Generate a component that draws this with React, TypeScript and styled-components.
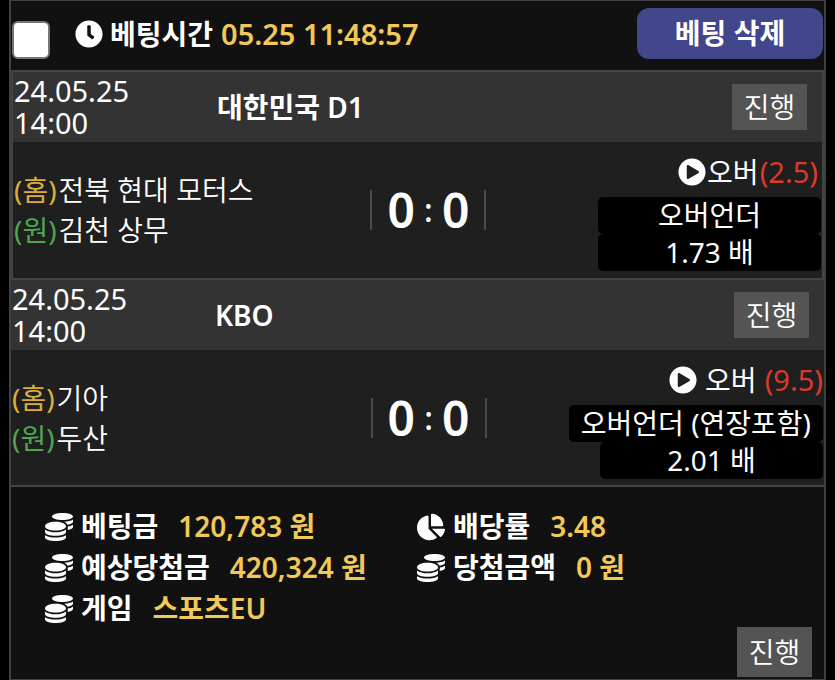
import React from "react";
import styled, { createGlobalStyle } from "styled-components";
import { FaChartPie, FaClock, FaCoins, FaPlayCircle } from "react-icons/fa";

const GlobalStyle = createGlobalStyle`
  * { box-sizing: border-box; }
  body {
    margin: 0;
    background: #000;
    color: #fff;
    font-family: "Noto Sans", "Noto Sans CJK KR", sans-serif;
    font-size: 28px;
    line-height: 32px;
  }
`;

const Slip = styled.main`
  display: flex;
  flex-direction: column;
  min-height: 100vh;
  margin: 0 9px;
  border: solid #404040;
  border-width: 1px 2px;
`;

const TopBar = styled.header`
  display: flex;
  align-items: center;
  justify-content: space-between;
  height: 69px;
  padding: 0 1px 4px 0;
  background: #111;
`;

const TimeLabel = styled.label`
  display: flex;
  align-items: center;
  font-weight: 600;
  white-space: nowrap;
`;

const Check = styled.input`
  appearance: none;
  flex: none;
  width: 38px;
  height: 38px;
  margin: 12px 25px 0 1px;
  border: 2px solid #767676;
  border-radius: 6px;
  background: #fff;

  &:checked {
    background: #41478a;
  }
`;

const Icon = styled.span`
  display: inline-flex;
  flex: none;
  font-size: 28px;
`;

const Caption = styled.span`
  margin: 0 8px 0 7px;
`;

const Accent = styled.span`
  color: #f0c958;
  font-size: 29px;
`;

const DeleteButton = styled.button`
  width: 186px;
  height: 51px;
  padding: 0 0 2px;
  border: 0;
  border-radius: 12px;
  background: #41478a;
  color: #fff;
  font: inherit;
  font-weight: 700;
`;

const Match = styled.article<{ $inset?: boolean }>`
  border: solid #434343;
  border-width: ${({ $inset }) => ($inset ? "2px 2px 0" : "2px 0")};
`;

const MatchHead = styled.div`
  display: grid;
  grid-template-columns: 204px 1fr auto;
  align-items: center;
  height: 70px;
  padding-right: 15px;
  background: #333;
`;

const Kickoff = styled.time`
  padding-left: 1px;
  font-size: 29px;
`;

const League = styled.h2`
  margin: 0;
  font-size: 28px;
  font-weight: 600;
`;

const Status = styled.span<{ $tall?: boolean }>`
  display: grid;
  flex: none;
  place-items: center;
  width: 75px;
  height: ${({ $tall }) => ($tall ? 50 : 46)}px;
  background: #545454;
  font-weight: 350;
`;

const MatchBody = styled.div<{ $inset?: boolean }>`
  display: grid;
  grid-template-columns: minmax(0, 358fr) 116px minmax(0, 336fr);
  align-items: center;
  height: ${({ $inset }) => ($inset ? 136 : 135)}px;
  background: #1f1f1f;
`;

const Teams = styled.div`
  padding-left: 1px;
  font-weight: 350;
  line-height: 40px;
  white-space: nowrap;
`;

const Side = styled.span<{ $home?: boolean }>`
  margin-right: 2px;
  color: ${({ $home }) => ($home ? "#d9ae3c" : "#4fa64f")};
  font-weight: 400;
`;

const Score = styled.div`
  display: flex;
  align-items: center;
  justify-content: space-between;
  height: 40px;
  padding: 0 15px;
  border: solid #4a4a4a;
  border-width: 0 2px;
  font-size: 48px;
  font-weight: 600;
`;

const Colon = styled.span`
  font-size: 32px;
  font-weight: 500;
  line-height: 36px;
`;

const Pick = styled.div`
  display: flex;
  flex-direction: column;
  align-items: flex-end;
  padding: 0 1px 2px 0;
`;

const Choice = styled.div<{ $spaced?: boolean }>`
  display: flex;
  align-items: center;
  gap: ${({ $spaced }) => ($spaced ? 8 : 1)}px;
  height: 50px;
  padding-right: ${({ $spaced }) => ($spaced ? 0 : 3)}px;
`;

const Line = styled.span`
  color: #d93a2b;
  font-size: 29px;
`;

const Pill = styled.div`
  min-width: 223px;
  height: 37px;
  padding: 0 12px;
  border-radius: 5px;
  background: #000;
  line-height: 36px;
  text-align: center;
  white-space: nowrap;
`;

const Summary = styled.footer`
  display: flex;
  flex: 1;
  padding: 19px 12px 2px 34px;
  background: #111;
`;

const Stats = styled.dl`
  display: grid;
  flex: 1;
  grid-template-columns: 372px 1fr;
  align-content: start;
  margin: 0;
  font-weight: 600;
  line-height: 41px;
`;

const Stat = styled.div`
  display: flex;
  align-items: center;
  white-space: nowrap;
`;

const Term = styled.dt`
  display: flex;
  align-items: center;
  gap: 8px;
`;

const Value = styled.dd`
  margin: 0 0 0 20px;
  color: #f0c958;
`;

const Foot = styled.div`
  display: flex;
  align-items: flex-end;
`;

type Game = {
  league: string;
  home: string;
  away: string;
  line: string;
  market: string;
  odds: string;
};

const games: Game[] = [
  { league: "대한민국 D1", home: "전북 현대 모터스", away: "김천 상무", line: "(2.5)", market: "오버언더", odds: "1.73 배" },
  { league: "KBO", home: "기아", away: "두산", line: "(9.5)", market: "오버언더 (연장포함)", odds: "2.01 배" },
];

const stats = [
  { icon: FaCoins, term: "베팅금", value: "120,783 원" },
  { icon: FaChartPie, term: "배당률", value: "3.48" },
  { icon: FaCoins, term: "예상당첨금", value: "420,324 원" },
  { icon: FaCoins, term: "당첨금액", value: "0 원" },
  { icon: FaCoins, term: "게임", value: "스포츠EU" },
];

function MatchCard({ game, first }: { game: Game; first: boolean }) {
  return (
    <Match $inset={first}>
      <MatchHead>
        <Kickoff dateTime="2024-05-25T14:00">
          24.05.25
          <br />
          14:00
        </Kickoff>
        <League>{game.league}</League>
        <Status>진행</Status>
      </MatchHead>
      <MatchBody $inset={first}>
        <Teams>
          <div>
            <Side $home>(홈)</Side>
            {game.home}
          </div>
          <div>
            <Side>(원)</Side>
            {game.away}
          </div>
        </Teams>
        <Score>
          <span>0</span>
          <Colon>:</Colon>
          <span>0</span>
        </Score>
        <Pick>
          <Choice $spaced={!first}>
            <Icon>
              <FaPlayCircle />
            </Icon>
            <span>오버</span>
            <Line>{game.line}</Line>
          </Choice>
          <Pill>{game.market}</Pill>
          <Pill>{game.odds}</Pill>
        </Pick>
      </MatchBody>
    </Match>
  );
}

export default function App() {
  return (
    <>
      <GlobalStyle />
      <Slip>
        <TopBar>
          <TimeLabel>
            <Check type="checkbox" />
            <Icon>
              <FaClock />
            </Icon>
            <Caption>베팅시간</Caption>
            <Accent>05.25 11:48:57</Accent>
          </TimeLabel>
          <DeleteButton type="button">베팅 삭제</DeleteButton>
        </TopBar>
        {games.map((game, index) => (
          <MatchCard key={game.league} game={game} first={index === 0} />
        ))}
        <Summary>
          <Stats>
            {stats.map(({ icon: Glyph, term, value }) => (
              <Stat key={term}>
                <Term>
                  <Icon>
                    <Glyph />
                  </Icon>
                  {term}
                </Term>
                <Value>{value}</Value>
              </Stat>
            ))}
          </Stats>
          <Foot>
            <Status $tall>진행</Status>
          </Foot>
        </Summary>
      </Slip>
    </>
  );
}
